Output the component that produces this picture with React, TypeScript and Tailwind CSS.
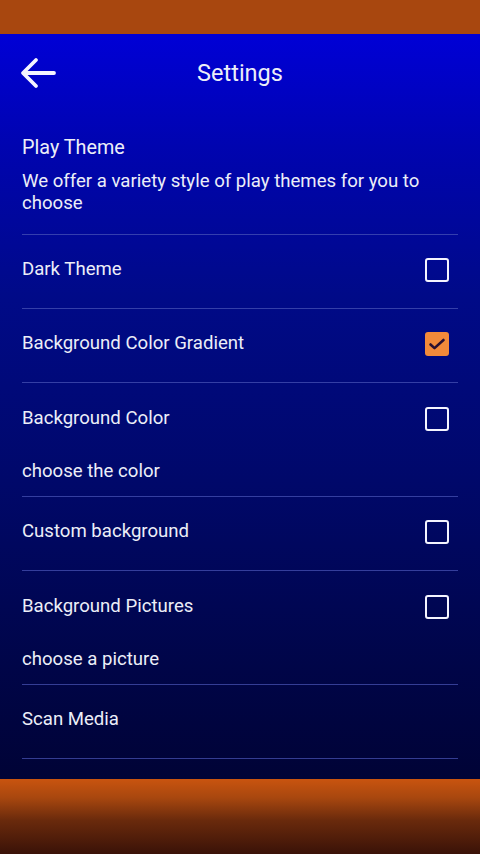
import React from "react";

function Box({ checked }: { checked?: boolean }) {
  if (checked) {
    return (
      <div className="w-[24px] h-[24px] rounded-[3px] bg-[#f28a3a] flex items-center justify-center">
        <svg width="18" height="18" viewBox="0 0 18 18" fill="none">
          <path d="M2.5 9.5l4 3.6L15.5 5" stroke="#2a1030" strokeWidth="2.6" strokeLinecap="round" strokeLinejoin="round" />
        </svg>
      </div>
    );
  }
  return <div className="w-[24px] h-[24px] rounded-[3px] border-[2.5px] border-[#f4f4ff]" />;
}

function Row({ title, sub, checkbox, checked }: { title: string; sub?: string; checkbox?: boolean; checked?: boolean }) {
  return (
    <div className="border-b border-[#4a55b8]/70">
      <div className={(sub ? "h-[70px] pt-[1px]" : "h-[73px] pb-[3px]") + " flex items-center justify-between pr-[9px]"}>
        <span className="text-[18.6px] text-[#eceef8]">{title}</span>
        {checkbox && <Box checked={checked} />}
      </div>
      {sub && <div className="h-[43px] text-[18.6px] text-[#eceef8] leading-[36px]">{sub}</div>}
    </div>
  );
}

export default function App() {
  return (
    <div className="w-[480px] h-[854px] flex flex-col overflow-hidden" style={{ fontFamily: "Roboto, 'Noto Sans', sans-serif" }}>
      <div className="h-[34px] bg-[#a8470f] shrink-0" />
      <div className="flex-1 bg-[linear-gradient(to_bottom,#0000d6_0%,#0004b0_15%,#000a88_35%,#00086a_60%,#000548_85%,#000336_100%)] flex flex-col">
        <div className="h-[77px] flex items-center relative px-[20px] shrink-0">
          <svg width="36" height="32" viewBox="0 0 36 32" fill="none" className="mt-[1px]">
            <path d="M34 16H4M16 3L3 16l13 13" stroke="#f4f4ff" strokeWidth="3.8" strokeLinecap="round" strokeLinejoin="round" />
          </svg>
          <div className="absolute left-0 right-0 text-center text-[23.5px] text-[#eceef8] pointer-events-none pt-[2px]">Settings</div>
        </div>
        <div className="px-[22px] pr-[22px]">
          <div className="border-b border-[#4a55b8]/70 pt-[23px] pb-[20px]">
            <div className="text-[19.8px] text-[#eceef8] leading-[28px]">Play Theme</div>
            <div className="text-[18.6px] text-[#eceef8] leading-[22px] mt-[8px]">We offer a variety style of play themes for you to choose</div>
          </div>
          <Row title="Dark Theme" checkbox />
          <Row title="Background Color Gradient" checkbox checked />
          <Row title="Background Color" checkbox sub="choose the color" />
          <Row title="Custom background" checkbox />
          <Row title="Background Pictures" checkbox sub="choose a picture" />
          <Row title="Scan Media" />
        </div>
        <div className="h-[1px]" />
      </div>
      <div className="h-[75px] shrink-0 bg-[linear-gradient(to_bottom,#c9540f_0%,#a8470f_25%,#6a2a0c_55%,#3a1208_100%)]" />
    </div>
  );
}
